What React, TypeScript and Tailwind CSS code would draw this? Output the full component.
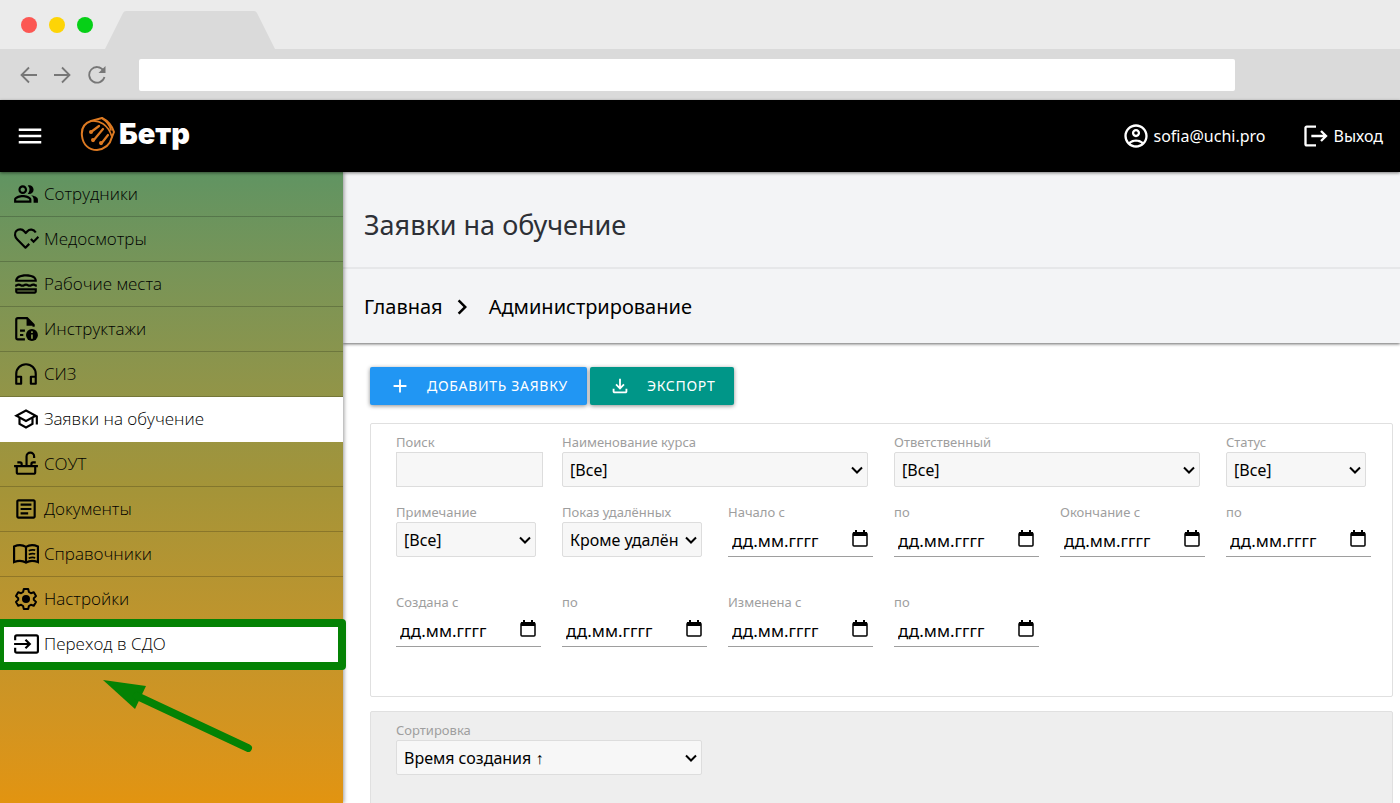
import { useState, type ReactNode } from 'react';
import { clsx } from 'clsx';
import {
  MdAdd,
  MdChevronRight,
  MdLogout,
  MdMenu,
  MdOutlineAccountCircle,
  MdOutlineArticle,
  MdOutlineLunchDining,
  MdOutlinePeopleAlt,
  MdOutlineSchool,
} from 'react-icons/md';

function LineIcon({ children }: { children: ReactNode }) {
  return (
    <svg viewBox="0 0 24 24" className="size-full" fill="none" stroke="currentColor" strokeWidth="2">
      {children}
    </svg>
  );
}

function HeartCheckIcon() {
  return (
    <LineIcon>
      <path d="m15 16.500-3.500 3.500L4 12.500C1.500 10 1.200 6.500 3 4.700c2.200-2.200 5.600-1.900 7.300.1l1.500 1.700 1.500-1.700c2-2.100 5.800-2 7.700 1.200" strokeLinejoin="round" />
      <path d="m16.500 12 2.500 2.500L23.500 10" />
    </LineIcon>
  );
}

function FileInfoIcon() {
  return (
    <LineIcon>
      <path d="M11 21.500H4.500A1.500 1.500 0 0 1 3 20V3.500A1.500 1.500 0 0 1 4.500 2H13l6 6v2" />
      <path d="M12.500 2v7H20z" fill="currentColor" stroke="none" />
      <path d="M6.500 13.500H11M6.500 17.500H9.500" />
      <circle cx="17.500" cy="17.500" r="5.500" fill="currentColor" stroke="none" />
      <path d="M17.500 17v4M17.500 14v1.700" stroke="#88974a" strokeWidth="1.500" />
    </LineIcon>
  );
}

function HeadphonesIcon() {
  return (
    <LineIcon>
      <path d="M3 21V12a9 9 0 0 1 18 0v9h-4.500v-6.500H21M3 14.500h4.500V21H3z" strokeLinejoin="round" />
    </LineIcon>
  );
}

function SinkIcon() {
  return (
    <LineIcon>
      <path d="M1 14h22M3.500 14v5.500a1.500 1.500 0 0 0 1.500 1.500h14a1.500 1.500 0 0 0 1.500-1.500V14" />
      <path d="M12.500 14V5a3.500 3.500 0 0 1 7 0v1.500M4 10.500h2.500a1.500 1.500 0 0 1 1.500 1.500v2M21 10.500h-2.500A1.500 1.500 0 0 0 17 12v2" />
    </LineIcon>
  );
}

function BookIcon() {
  return (
    <LineIcon>
      <path d="M12 5.500C9 3.500 4.500 3.500 1 5v14.500c3.500-1.500 8-1.500 11 .5 3-2 7.500-2 11-.5V5c-3.500-1.500-8-1.500-11 .5zV20" />
      <path d="M14.500 9c2-.9 4-1 6-.5M14.500 12.500c2-.9 4-1 6-.5M14.500 16c2-.9 4-1 6-.5" strokeWidth="1.600" />
    </LineIcon>
  );
}

function SettingsIcon() {
  return (
    <svg viewBox="-1 -1 26 26" className="size-full" fill="none" stroke="currentColor" strokeWidth="2">
      <path
        d="M9.800 2h4.400l.7 3 2 1.200 2.900-.9 2.200 3.800-2.200 2.100v1.600l2.200 2.100-2.200 3.800-2.900-.9-2 1.200-.7 3H9.800l-.7-3-2-1.200-2.900.9L2 14.900l2.200-2.100v-1.600L2 9.100l2.200-3.800 2.900.9 2-1.200z"
        strokeLinejoin="round"
      />
      <circle cx="12" cy="12" r="4" fill="currentColor" stroke="none" />
    </svg>
  );
}

function EnterIcon() {
  return (
    <LineIcon>
      <path d="M2 8.500V5.500A1.500 1.500 0 0 1 3.500 4h18A1.500 1.500 0 0 1 23 5.500v13a1.500 1.500 0 0 1-1.500 1.500h-18A1.500 1.500 0 0 1 2 18.500v-3" />
      <path d="M1 12h14M11.500 8l4 4-4 4" />
    </LineIcon>
  );
}

function DownloadIcon() {
  return (
    <svg viewBox="0 0 24 24" className="size-full" fill="currentColor">
      <path d="m12 16-5-5 1.400-1.450 2.600 2.600V4h2v8.150l2.600-2.600L17 11zm-6 4q-.825 0-1.412-.587T4 18v-3h2v3h12v-3h2v3q0 .825-.587 1.413T18 20z" />
    </svg>
  );
}

function CalendarIcon() {
  return (
    <svg viewBox="0 0 16 18" className="h-[18px] w-4" fill="none">
      <rect x="1" y="3" width="14" height="13" rx="1" stroke="#000" strokeWidth="1.500" />
      <path d="M1 2h14v4H1zM3 0h2v3H3zM11 0h2v3h-2z" fill="#000" />
    </svg>
  );
}

const menu: { label: string; icon: ReactNode }[] = [
  { label: 'Сотрудники', icon: <MdOutlinePeopleAlt className="size-full" /> },
  { label: 'Медосмотры', icon: <HeartCheckIcon /> },
  { label: 'Рабочие места', icon: <MdOutlineLunchDining className="size-full" /> },
  { label: 'Инструктажи', icon: <FileInfoIcon /> },
  { label: 'СИЗ', icon: <HeadphonesIcon /> },
  { label: 'Заявки на обучение', icon: <MdOutlineSchool className="size-full" /> },
  { label: 'СОУТ', icon: <SinkIcon /> },
  { label: 'Документы', icon: <MdOutlineArticle className="size-full" /> },
  { label: 'Справочники', icon: <BookIcon /> },
  { label: 'Настройки', icon: <SettingsIcon /> },
  { label: 'Переход в СДО', icon: <EnterIcon /> },
];

function BrowserBar() {
  return (
    <div className="bg-[#dadada]">
      <div className="flex h-[49px] bg-[#ebebeb]">
        <div className="flex items-center gap-3 pl-[21px]">
          <span className="size-4 rounded-full bg-[#fc5753]" />
          <span className="size-4 rounded-full bg-[#fdd406]" />
          <span className="size-4 rounded-full bg-[#06d017]" />
        </div>
        <svg viewBox="0 0 170 38" className="ml-3 h-[38px] w-[170px] self-end">
          <path d="M0 38 18 2Q19 0 21 0H149Q151 0 152 2L170 38z" fill="#dadada" />
        </svg>
      </div>
      <div className="flex h-[51px] items-center pl-5 text-[#777777]">
        <button type="button" aria-label="Назад">
          <svg viewBox="0 0 18 18" className="size-[18px]" fill="none" stroke="currentColor" strokeWidth="1.800">
            <path d="M17 9H2M9 1.500 1.500 9 9 16.500" />
          </svg>
        </button>
        <button type="button" aria-label="Вперёд" className="ml-[15px]">
          <svg viewBox="0 0 18 18" className="size-[18px]" fill="none" stroke="currentColor" strokeWidth="1.800">
            <path d="M1 9h15M9 1.500 16.500 9 9 16.500" />
          </svg>
        </button>
        <button type="button" aria-label="Обновить" className="ml-[17px]">
          <svg viewBox="0 0 18 18" className="size-[18px]" fill="none" stroke="currentColor" strokeWidth="1.800">
            <path d="M15.500 4.500A7.800 7.800 0 1 0 16.500 11" />
            <path d="M17.500 0v7h-7z" fill="currentColor" stroke="none" />
          </svg>
        </button>
        <input type="text" aria-label="Адрес" className="ml-[33px] mr-[165px] h-8 min-w-0 flex-1 rounded-[2px] bg-white px-3 text-black" />
      </div>
    </div>
  );
}

function Logo() {
  return (
    <a href="#" className="flex items-center text-white">
      <svg viewBox="0 0 36 36" className="size-9" fill="none" stroke="#dd7a22" strokeWidth="2" strokeLinecap="round" strokeLinejoin="round">
        <path d="M11 5C5 7 1 12 2 20c1 9 7 14 15 14 8-1 13-5 15-13l2-5C32 10 28 5 22 2z" />
        <path d="M11 5c8-1 17 3 21 16M22 2c4 3 8 7 9 12" strokeWidth="1.600" />
        <path d="m11 16 8-6M13 25l10-12M21 28l7-9" strokeWidth="2.200" />
        <g fill="#dd7a22" stroke="none">
          <circle cx="11" cy="16" r="2" />
          <circle cx="13" cy="24" r="2" />
          <circle cx="21" cy="27" r="2" />
        </g>
      </svg>
      <span className="ml-[3px] font-['Inter','Open_Sans',sans-serif] text-[29px] leading-9 font-black">Бетр</span>
    </a>
  );
}

function Field({ id, label, children, wide }: { id: string; label: string; children: ReactNode; wide?: boolean }) {
  return (
    <div className={clsx('min-w-0', wide && 'col-span-2')}>
      <label htmlFor={id} className="block text-[13px] leading-5 text-[#9e9e9e]">{label}</label>
      {children}
    </div>
  );
}

function SelectField({ id, label, options, wide }: { id: string; label: string; options: string[]; wide?: boolean }) {
  return (
    <Field id={id} label={label} wide={wide}>
      <div className="relative mr-[26px]">
        <select id={id} className="h-[35px] w-full appearance-none rounded-[2px] border border-[#dddddd] bg-[#f7f7f7] pl-[7px] pr-[22px] text-base text-black">
          {options.map((o) => (
            <option key={o}>{o}</option>
          ))}
        </select>
        <svg viewBox="0 0 12 8" className="pointer-events-none absolute top-[14px] right-[5px] h-2 w-3" fill="none" stroke="#000" strokeWidth="2">
          <path d="m1 1.500 5 5 5-5" />
        </svg>
      </div>
    </Field>
  );
}

function DateField({ id, label }: { id: string; label: string }) {
  return (
    <Field id={id} label={label}>
      <div className="mr-[21px] flex h-[35px] items-center border-b border-[#9e9e9e] pr-[5px]">
        <input id={id} type="text" placeholder="дд.мм.гггг" className="min-w-0 flex-1 pt-1 pl-1 text-[17px] placeholder:text-black" />
        <button type="button" aria-label={`Календарь: ${label}`}><CalendarIcon /></button>
      </div>
    </Field>
  );
}

export default function App() {
  const [active, setActive] = useState('Заявки на обучение');

  return (
    <div className="flex h-screen flex-col overflow-hidden bg-white font-['Noto_Sans','Open_Sans',sans-serif] text-black">
      <BrowserBar />

      <header className="z-10 flex h-[72px] shrink-0 items-center bg-black pr-[17px] pl-[15px] text-white shadow-[0_1px_3px_rgba(0,0,0,0.5)]">
        <button type="button" aria-label="Меню"><MdMenu className="size-[30px]" /></button>
        <div className="ml-[35px] pb-1"><Logo /></div>
        <div className="ml-auto flex items-center gap-9 text-base">
          <a href="#" className="flex items-center gap-1"><MdOutlineAccountCircle className="size-7" />sofia@uchi.pro</a>
          <a href="#" className="flex items-center gap-1"><MdLogout className="size-7" />Выход</a>
        </div>
      </header>

      <div className="flex min-h-0 flex-1">
        <aside className="relative w-[343px] shrink-0 bg-linear-to-b from-[#609462] via-[#a49438] to-[#e29410] shadow-[1px_0_4px_rgba(0,0,0,0.4)]">
          <nav>
            {menu.map(({ label, icon }) => {
              const isLink = label === 'Переход в СДО';
              return (
                <a
                  key={label}
                  href="#"
                  onClick={() => setActive(label)}
                  className={clsx(
                    "flex h-[45px] items-center gap-1 border-b pl-3 font-['Open_Sans','Noto_Sans',sans-serif] text-[17px] font-light",
                    isLink || active === label ? 'border-white bg-white' : 'border-black/20'
                  )}
                >
                  <span className="size-7 shrink-0 p-px">{icon}</span>
                  {label}
                </a>
              );
            })}
          </nav>

          {/* Highlight around the last menu item */}
          <div className="pointer-events-none absolute top-[447px] right-[-3px] left-[-4px] z-10 h-[51px] rounded-[4px] border-8 border-[#048204]" />
          <svg viewBox="0 0 150 72" className="pointer-events-none absolute top-[508px] left-[103px] h-[72px] w-[150px]">
            <path d="M0 0 43 6 32 29z" fill="#048204" />
            <path d="m34 16 111 52" stroke="#048204" strokeWidth="8" strokeLinecap="round" />
          </svg>
        </aside>

        <main className="min-w-0 flex-1">
          <div className="bg-[#f3f4f6] shadow-[0_1px_3px_rgba(0,0,0,0.6)]">
            <h1 className="border-b-2 border-[#e6e7e9] pt-[33px] pb-[22px] pl-[21px] text-[27px] leading-10 text-[#2d3036]">Заявки на обучение</h1>
            <nav className="flex h-[74px] items-center pt-px pl-[21px] text-xl">
              <a href="#">Главная</a>
              <MdChevronRight className="mr-3 ml-1 size-[30px]" />
              <a href="#">Администрирование</a>
            </nav>
          </div>

          <div className="pt-6 pr-[7px] pl-[27px]">
            <div className="flex gap-[3px] text-sm text-white">
              <button type="button" className="flex h-[38px] items-center rounded-[2px] bg-[#2196f3] px-[19px] tracking-wider shadow-[0_1px_4px_rgba(0,0,0,0.45)]">
                <MdAdd className="mr-4 size-[22px]" />ДОБАВИТЬ ЗАЯВКУ
              </button>
              <button type="button" className="flex h-[38px] items-center rounded-[2px] bg-[#009688] px-[19px] tracking-wider shadow-[0_1px_4px_rgba(0,0,0,0.45)]">
                <span className="mr-4 size-[22px]"><DownloadIcon /></span>ЭКСПОРТ
              </button>
            </div>

            <form className="mt-[18px] grid h-[274px] grid-cols-6 content-start rounded-[2px] border border-[#e0e0e0] pt-2 pl-[25px]">
              <Field id="search" label="Поиск">
                <input id="search" type="text" className="h-[35px] w-[147px] border border-[#dddddd] bg-[#f7f7f7] px-2 text-base" />
              </Field>
              <SelectField id="course" label="Наименование курса" options={['[Все]']} wide />
              <SelectField id="owner" label="Ответственный" options={['[Все]']} wide />
              <SelectField id="status" label="Статус" options={['[Все]']} />

              <div className="col-span-6 mt-[15px] grid grid-cols-6">
                <SelectField id="note" label="Примечание" options={['[Все]']} />
                <SelectField id="deleted" label="Показ удалённых" options={['Кроме удалённых']} />
                <DateField id="start-from" label="Начало с" />
                <DateField id="start-to" label="по" />
                <DateField id="end-from" label="Окончание с" />
                <DateField id="end-to" label="по" />
              </div>
              <div className="col-span-6 mt-[35px] grid grid-cols-6">
                <DateField id="created-from" label="Создана с" />
                <DateField id="created-to" label="по" />
                <DateField id="changed-from" label="Изменена с" />
                <DateField id="changed-to" label="по" />
              </div>
            </form>

            <div className="mt-[14px] grid h-[110px] grid-cols-6 content-start rounded-[2px] border border-[#e0e0e0] bg-[#eeeeee] pt-2 pl-[25px]">
              <SelectField id="sort" label="Сортировка" options={['Время создания ↑']} wide />
            </div>
          </div>
        </main>
      </div>
    </div>
  );
}
